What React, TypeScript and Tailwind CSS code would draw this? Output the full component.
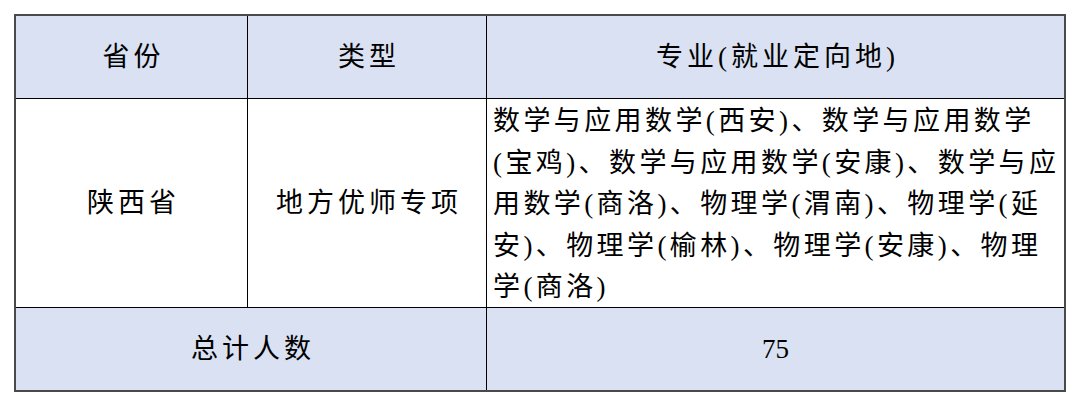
import React from "react";

const font = "font-['Liberation_Serif','Noto_Sans_CJK_SC',serif]";

export default function App() {
  const lines = [
    "数学与应用数学(西安)、数学与应用数学",
    "(宝鸡)、数学与应用数学(安康)、数学与应",
    "用数学(商洛)、物理学(渭南)、物理学(延",
    "安)、物理学(榆林)、物理学(安康)、物理",
    "学(商洛)",
  ];
  return (
    <div className={`w-[1080px] h-[405px] bg-white pt-[14px] pl-[14px] text-black ${font}`}>
      <div className="w-[1052px] border-2 border-[#4a4a4a]">
        <div className="grid grid-cols-[232px_239px_577px]">
          {/* header */}
          <div className="h-[83px] bg-[#d9e1f2] border-r border-b border-black flex items-center justify-center text-[27px] tracking-[4px] pl-[4px]">
            省份
          </div>
          <div className="h-[83px] bg-[#d9e1f2] border-r border-b border-black flex items-center justify-center text-[27px] tracking-[4px] pl-[4px]">
            类型
          </div>
          <div className="h-[83px] bg-[#d9e1f2] border-b border-black flex items-center justify-center text-[27px] tracking-[4px] pl-[4px]">
            专业(就业定向地)
          </div>

          {/* body */}
          <div className="h-[209px] bg-white border-r border-b border-black flex items-center justify-center text-[27px] tracking-[4px] pl-[4px]">
            陕西省
          </div>
          <div className="h-[209px] bg-white border-r border-b border-black flex items-center justify-center text-[27px] tracking-[4px] pl-[4px]">
            地方优师专项
          </div>
          <div className="h-[209px] bg-white border-b border-black pl-[6px] pt-[2px] text-[27px] tracking-[3.4px] leading-[41.6px]">
            {lines.map((l, i) => (
              <div key={i} className="whitespace-nowrap">
                {l}
              </div>
            ))}
          </div>

          {/* footer */}
          <div className="col-span-2 h-[82px] bg-[#d9e1f2] border-r border-black flex items-center justify-center text-[27px] tracking-[4px] pl-[4px]">
            总计人数
          </div>
          <div className="h-[82px] bg-[#d9e1f2] flex items-center justify-center text-[27px]">
            75
          </div>
        </div>
      </div>
    </div>
  );
}
